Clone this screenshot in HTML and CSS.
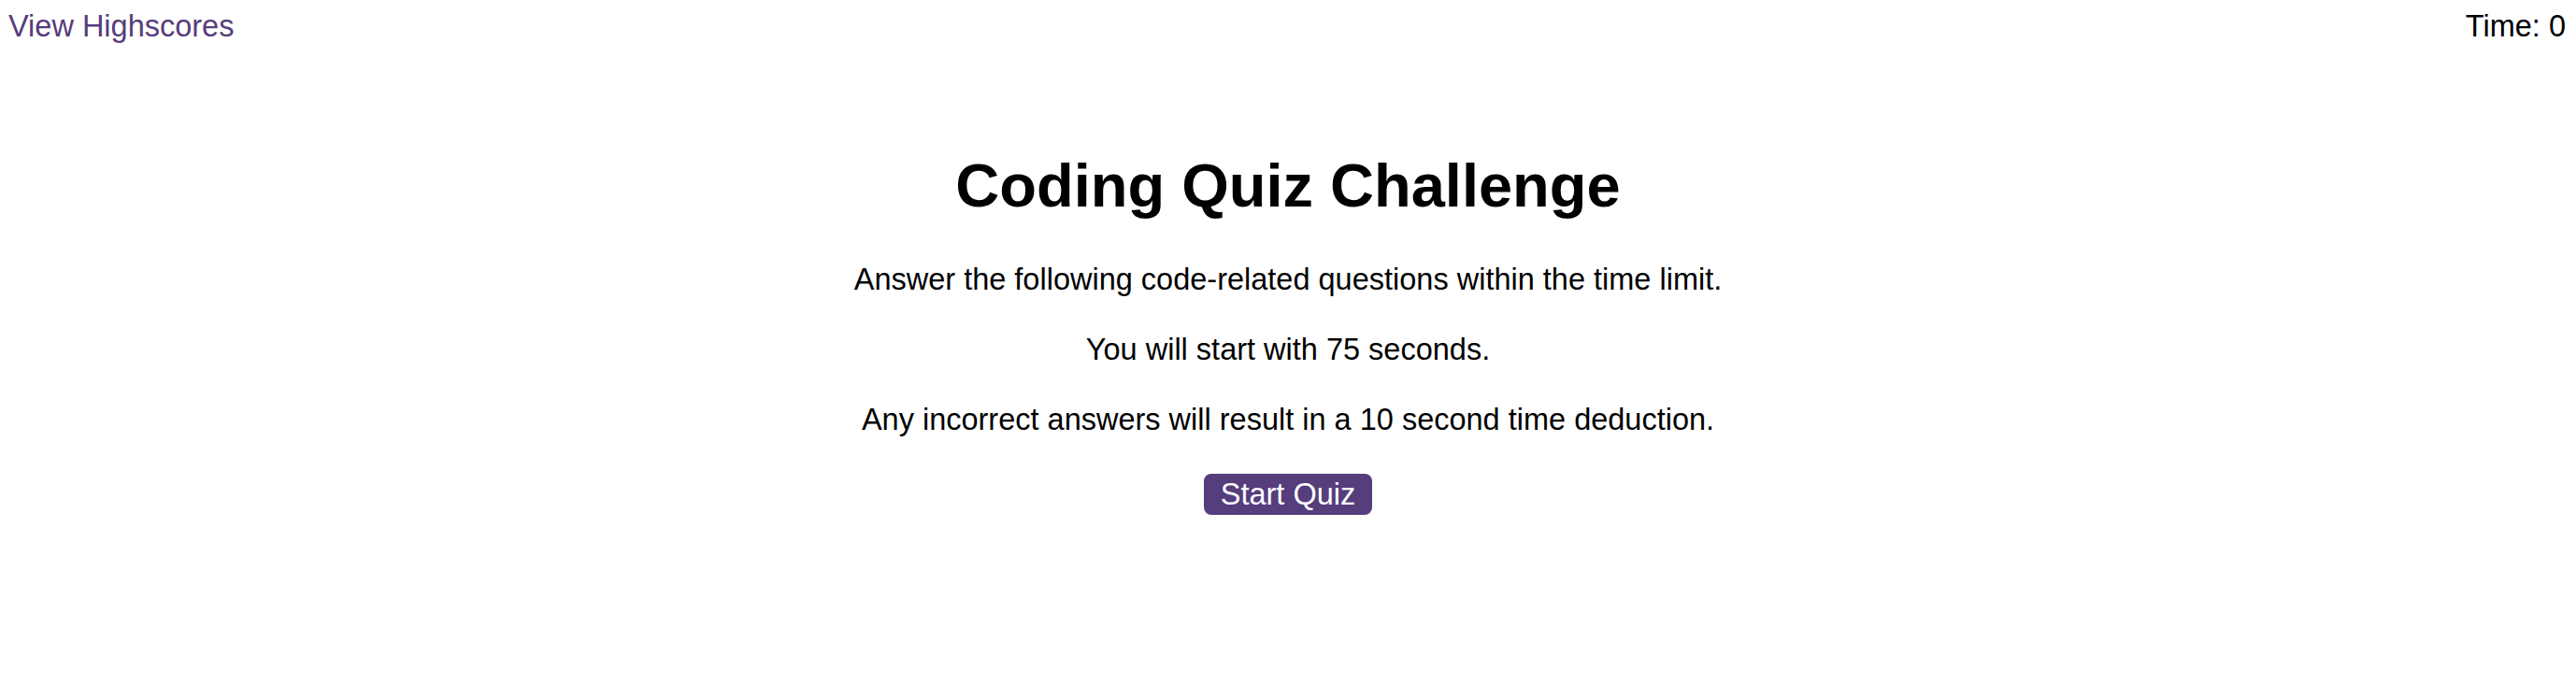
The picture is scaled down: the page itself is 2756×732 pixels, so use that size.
FILE: index.html
```html
<!DOCTYPE html>
<html lang="en">
<head>
<meta charset="UTF-8">
<title>Coding Quiz Challenge</title>
<link rel="stylesheet" href="styles.css">
</head>
<body>
<header class="topbar">
  <a class="highscores-link" href="#">View Highscores</a>
  <div class="timer">Time: <span class="timer-value">0</span></div>
</header>
<main class="intro">
  <h1 class="intro-title">Coding Quiz Challenge</h1>
  <p class="intro-text">Answer the following code-related questions within the time limit.</p>
  <p class="intro-text">You will start with 75 seconds.</p>
  <p class="intro-text">Any incorrect answers will result in a 10 second time deduction.</p>
  <button class="start-btn" type="button">Start Quiz</button>
</main>
</body>
</html>
```

FILE: styles.css
```css
html, body {
  background: #ffffff;
}

body {
  margin: 8px;
  font-family: "Liberation Sans", Arial, sans-serif;
  font-size: 32.5px;
  color: #000000;
}

.topbar {
  display: flex;
  justify-content: space-between;
  align-items: flex-start;
  line-height: 36px;
  padding-top: 2px;
}

.highscores-link {
  color: #563d7c;
  text-decoration: none;
  padding-left: 1px;
}

.timer {
  padding-right: 3px;
}

.intro {
  display: flex;
  flex-direction: column;
  align-items: center;
  text-align: center;
  padding-top: 115px;
}

.intro-title {
  margin: 0 0 42px;
  font-size: 65px;
  line-height: 75px;
  font-weight: bold;
}

.intro-text {
  margin: 0 0 33px;
  line-height: 42px;
}

.intro-text:last-of-type {
  margin-bottom: 37px;
}

.start-btn {
  font-family: "Liberation Sans", Arial, sans-serif;
  font-size: 32.5px;
  line-height: 38px;
  padding: 3px 18px;
  border: none;
  border-radius: 8px;
  background: #563d7c;
  color: #ffffff;
  cursor: pointer;
}
```
